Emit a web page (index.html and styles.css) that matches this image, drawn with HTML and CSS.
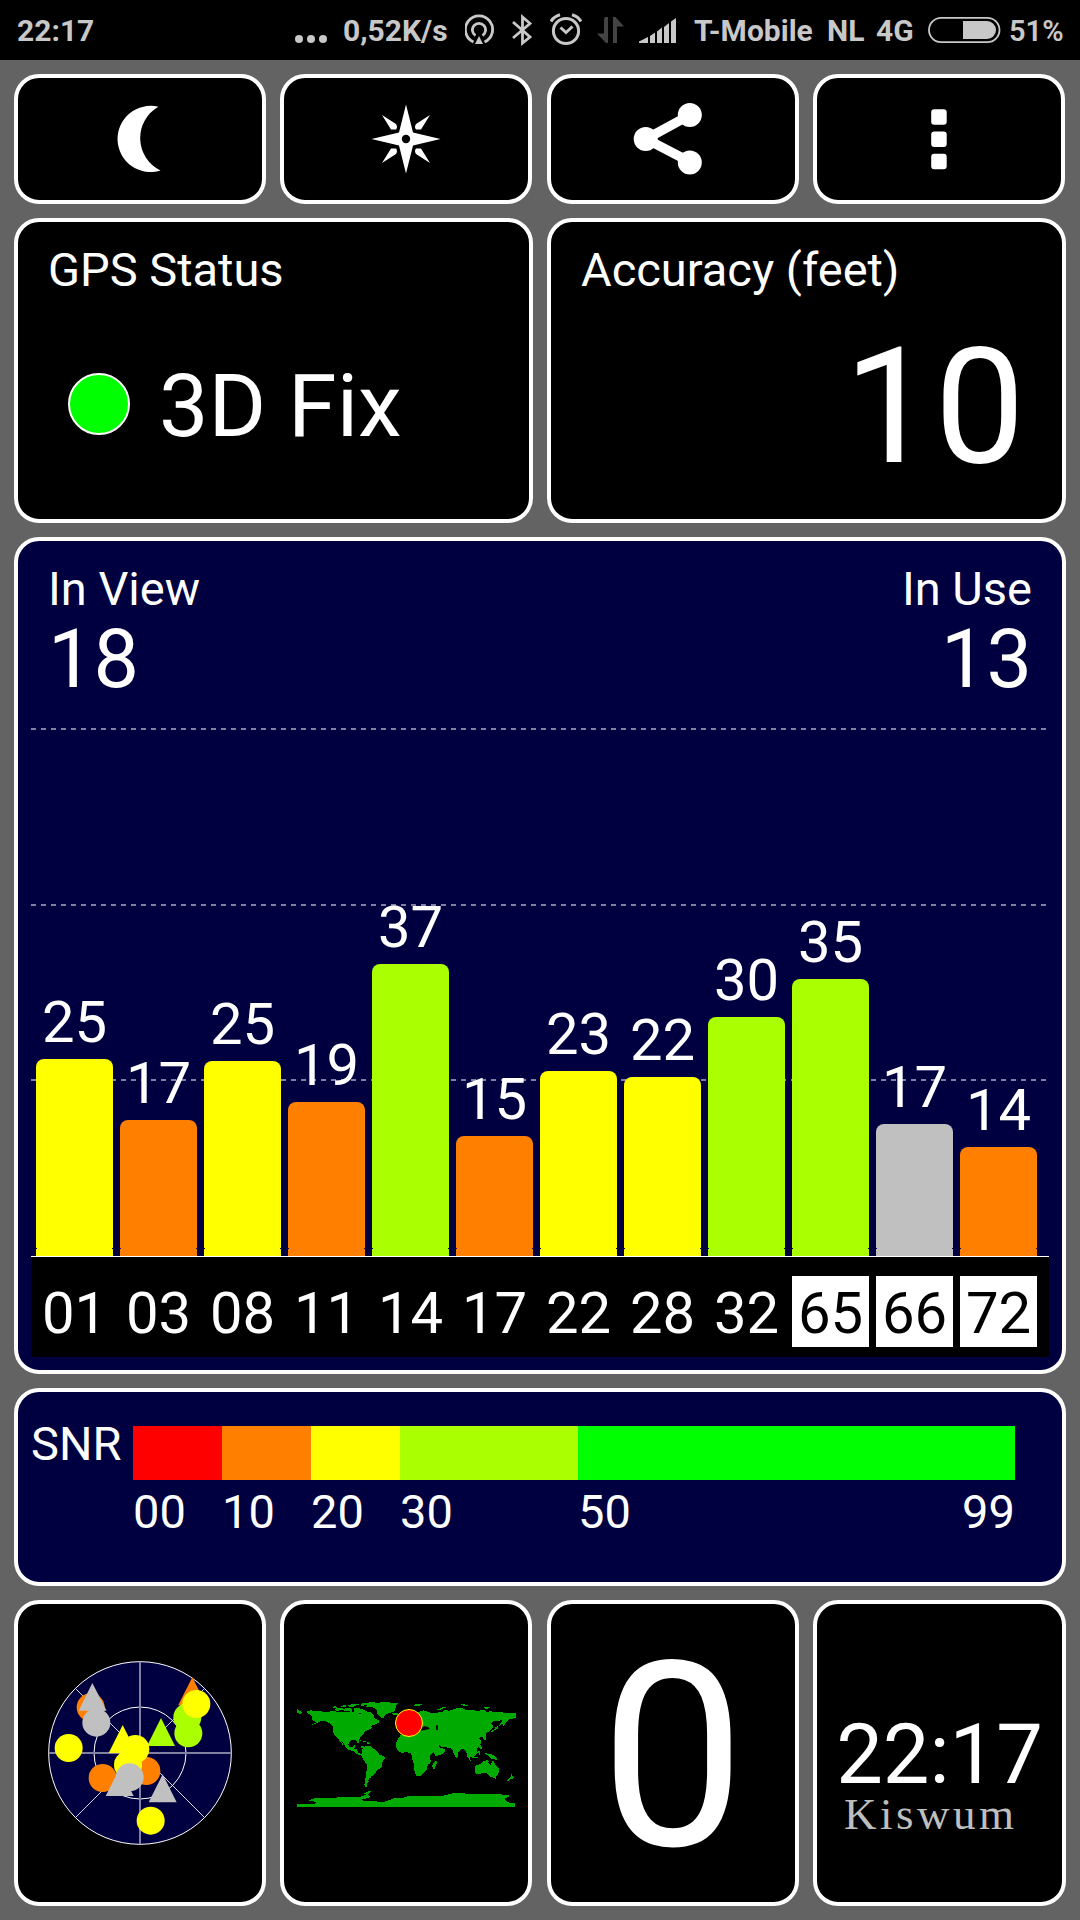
FILE: index.html
```html
<!DOCTYPE html>
<html lang="en">
<head>
    <meta charset="UTF-8">
    <meta name="viewport" content="width=device-width, initial-scale=1.0">
    <title>GPS Test</title>
    <link rel="stylesheet" href="styles.css">
</head>
<body>

<div class="statusbar">
    <span>22:17</span>
    <svg width="34" height="60" viewBox="0 0 34 60" fill="currentColor"><circle cx="4" cy="39" r="4"/><circle cx="16" cy="39" r="4"/><circle cx="28" cy="39" r="4"/></svg>
    <span>0,52K/s</span>
    <!-- hotspot -->
    <svg width="30" height="60" viewBox="0 0 30 60">
        <path d="M8.5 42A13.6 13.6 0 1 1 19.5 42M10.5 35.5A6.6 6.6 0 1 1 17.5 35.5" fill="none" stroke="currentColor" stroke-width="2.8"/>
        <path d="M14 36l4 8h-8z" fill="currentColor"/>
    </svg>
    <!-- bluetooth -->
    <svg width="22" height="60" viewBox="0 0 22 60"><path d="M1 22L18 37l-7.5 6V17L18 23.500L1 38" fill="none" stroke="currentColor" stroke-width="2.8"/></svg>
    <!-- alarm -->
    <svg width="34" height="60" viewBox="0 0 34 60" fill="none" stroke="currentColor" stroke-width="3">
        <circle cx="16" cy="31" r="12.600"/>
        <path d="M10.500 27.500l5.500 5 6.500-6M1 21.500C3 18 6 16 10 14.800M31 21.500C29 18 26 16 22 14.800"/>
    </svg>
    <svg class="dim" width="28" height="60" viewBox="0 0 28 60" fill="currentColor"><path d="M7 19q0-2 2-2h2v26H9L0 33.500h7zM16 17h2.500L27 26.500h-7V43h-4z"/></svg>
    <svg width="40" height="60" viewBox="0 0 40 60" fill="currentColor"><path d="M1 43v-1.500l9-4.500v6zM12 36l5-3.500V43h-5zM19 31.500l5-4V43h-5zM26 27l5-4v20h-5zM33 21.500l5-3.500v25h-5z"/></svg>
    <span>T-Mobile</span>
    <span>NL</span>
    <span>4G</span>
    <svg width="74" height="60" viewBox="0 0 74 60">
        <rect x="1" y="17.800" width="70.500" height="24.400" rx="12.200" fill="none" stroke="currentColor" stroke-width="1.800"/>
        <path d="M35 21h24a9 9 0 0 1 0 18H35z" fill="currentColor"/>
    </svg>
    <span class="percent">51%</span>
</div>

<div class="screen">
    <div class="row toolbar">
        <div class="card">
            <svg width="80" height="80" viewBox="0 0 80 80"><path d="M58.400 7.800A33 33.100 0 1 0 60.500 71.500A36 36 0 0 1 58.400 7.800z" fill="#fff"/></svg>
        </div>
        <div class="card">
            <svg width="80" height="80" viewBox="-40 -40 80 80" fill="#fff">
                <path d="M0-34.500L7-6.500 34.500 0 7 6.500 0 34.500-7 6.500-34.500 0-7-6.500z"/>
                <path d="M-24-24L-10-15Q-8-12-10-9.500L-15-9.500zM24-24L10-15Q8-12 10-9.500L15-9.500zM-24 24L-10 15Q-8 12-10 9.500L-15 9.500zM24 24L10 15Q8 12 10 9.500L15 9.500z"/>
                <circle r="4.200" fill="#000"/>
            </svg>
        </div>
        <div class="card">
            <svg width="80" height="80" viewBox="0 0 80 80" fill="#fff">
                <path d="M56.800 16.200L13 40l43.800 22.800" fill="none" stroke="#fff" stroke-width="9.500"/>
                <circle cx="12.700" cy="40" r="12"/><circle cx="56.800" cy="16" r="12"/><circle cx="56.800" cy="63.500" r="12"/>
            </svg>
        </div>
        <div class="card">
            <svg width="80" height="80" viewBox="0 0 80 80" fill="#fff"><rect x="32.200" y="10.200" width="15.500" height="15.500" rx="3"/><rect x="32.200" y="32.500" width="15.500" height="15.500" rx="3"/><rect x="32.200" y="54.800" width="15.500" height="15.500" rx="3"/></svg>
        </div>
    </div>

    <div class="row two">
        <div class="card info">
            <div class="label">GPS Status</div>
            <div class="fix"><span class="led"></span>3D Fix</div>
        </div>
        <div class="card info">
            <div class="label">Accuracy (feet)</div>
            <div class="accuracy">10</div>
        </div>
    </div>

    <div class="card signals">
        <div class="counts">
            <div>
                <div class="label">In View</div>
                <div class="count">18</div>
            </div>
            <div class="right">
                <div class="label">In Use</div>
                <div class="count">13</div>
            </div>
        </div>
        <div class="plot">
            <div class="grid"><i></i><i></i><i></i></div>
            <div class="sat"><b>25</b><div class="bar yellow" style="height:197px"></div></div>
            <div class="sat"><b>17</b><div class="bar orange" style="height:136px"></div></div>
            <div class="sat"><b>25</b><div class="bar yellow" style="height:195px"></div></div>
            <div class="sat"><b>19</b><div class="bar orange" style="height:154px"></div></div>
            <div class="sat"><b>37</b><div class="bar lime" style="height:292px"></div></div>
            <div class="sat"><b>15</b><div class="bar orange" style="height:120px"></div></div>
            <div class="sat"><b>23</b><div class="bar yellow" style="height:185px"></div></div>
            <div class="sat"><b>22</b><div class="bar yellow" style="height:179px"></div></div>
            <div class="sat"><b>30</b><div class="bar lime" style="height:239px"></div></div>
            <div class="sat"><b>35</b><div class="bar lime" style="height:277px"></div></div>
            <div class="sat"><b>17</b><div class="bar gray" style="height:132px"></div></div>
            <div class="sat"><b>14</b><div class="bar orange" style="height:109px"></div></div>
        </div>
        <div class="ids">
            <span>01</span><span>03</span><span>08</span><span>11</span><span>14</span><span>17</span>
            <span>22</span><span>28</span><span>32</span><span class="glonass">65</span><span class="glonass">66</span><span class="glonass">72</span>
        </div>
    </div>

    <div class="card snr">
        <div class="snr-label">SNR</div>
        <div>
            <div class="scale"><div class="red"></div><div class="orange"></div><div class="yellow"></div><div class="lime"></div><div class="green"></div></div>
            <div class="scale ticks"><span>00</span><span>10</span><span>20</span><span>30</span><span>50</span><span>99</span></div>
        </div>
    </div>

    <div class="row tiles">
        <div class="card">
            <!-- sky view -->
            <svg class="sky" width="220" height="220" viewBox="0 0 660 660">
                <circle cx="330" cy="339" r="274" fill="#000040" stroke="#fff" stroke-width="3"/>
                <circle cx="330" cy="339" r="138" fill="none" stroke="#fff" stroke-width="3"/>
                <path d="M137 146l386 386M523 146L137 532" stroke="#fff" stroke-width="2.500"/>
                <path d="M330 65v548M56 339h548" stroke="#8080a0" stroke-width="6"/>
                <g fill="#ff8000"><circle cx="182" cy="202" r="42"/><circle cx="218" cy="414" r="42"/><circle cx="349" cy="393" r="42"/><path d="M487 112l42 83h-84z"/></g>
                <g fill="#aaff00"><circle cx="472" cy="232" r="42"/><circle cx="475" cy="280" r="42"/><path d="M393 234l42 84h-84z"/></g>
                <g fill="#ff0"><circle cx="499" cy="192" r="42"/><circle cx="116" cy="324" r="42"/><circle cx="316" cy="327" r="42"/><circle cx="294" cy="375" r="42"/><circle cx="362" cy="542" r="42"/><path d="M278 255l42 84h-84z"/></g>
                <g fill="#c0c0c0"><circle cx="199" cy="248" r="42"/><circle cx="299" cy="412" r="42"/><path d="M187 129l43 83h-84zM269 385l42 83h-84zM398 403l42 84h-84z"/></g>
            </svg>
        </div>
        <div class="card">
            <!-- world map -->
            <svg class="map" width="245" height="150" viewBox="0 0 735 450">
                <g fill="#00aa00" shape-rendering="crispEdges">
                    <!-- North and Central America -->
                    <path d="M78 95l15-4 24 3 30 2 6-4 30 5 22 0 8-4 12 5 8-10 7 6-2 8 10 1 8-8 12 0 12 8 4 12 12 6 1 6-13 8-10 2-3 5 9 1-15 6-11 6-6 10-8 8-4 8 1 10-5-3-3-7-12-1-9 5-3 8 4 9 9-2 4-4 5 1-4 9 9 2 1 10 9 4 0 3-10-2-10-8-12-4-13-7-2-8-9-11-6-8 8 14 1 5-8-10-7-12-10-7-4-10 0-14-5-9-10-6-12-5-11 0-9 6-18 6 14-9-10-5-5-7 4-4z"/>
                    <path d="M51 87l12 8 6 4-6 2-12-1z"/>
                    <!-- Arctic islands and Greenland -->
                    <path d="M165 86l17-3 9 4 10-3 14 2 0 6-11 1-16-2-20 1zM153 85l13-7 7 3-8 4zM181 78l16-3 5 4-16 3zM205 75l18-4 20 0-13 5-10 5-14-1zM223 85l16 0 20 8 10 8 4 8-3 3 7 10 4 9-5 3-9-11-8-2-7-8-1-8-12-7-17-1z"/>
                    <path d="M247 70l25-3 22 1 20-2 17 1-3 3 20-1 7 2-8 4 1 7-4 5 2 6-12 4-12 4-9 8-3 6-8-2-6-7-5-7-1-8-8-8-7-2-18 0 5-5-20 1z"/>
                    <path d="M335 99l8-1 9 0 4 3-4 3-9 2-6-3zM253 182l5 7-2-7zM237 181l14 1 10 5-12-2zM260 187l11 1-4 5-8-3z"/>
                    <!-- South America -->
                    <path d="M238 202l10-5 3 3 10-1 10 0 9 7 7 4 6 6 5 8 14 5 3 5-8 12-1 11-5 9-8 3-7 10-5 7-8 3-1 5-6 2-1 6 1 4-6 4 1 9 4 4-8-2-4-7 2-13 3-12 1-12 3-16-1-9-6-5-5-9-5-8-2-6 4-5-1-7 3-9z"/>
                    <!-- Africa -->
                    <path d="M361 166l20-3 12 1 5 6 12 2 8-3 14 3 7 3 3 8 8 14 4 5 12-2 5 3-8 11-11 11-3 7 3 9-1 9-8 5-2 7-1 7-7 8-7 7-8 5-9 0-3-10-5-13 1-11-3-11-4-10 0-9-4-7-16-1-7 1-9-1-6-7-5-7 1-15 5-10z"/>
                    <path d="M468 242l3 5-4 11-3 8-6 0-1-9 4-9z"/>
                    <!-- Europe and Asia -->
                    <path d="M387 137l16-4 5-8 1-12-3-9 9-8 14-5 12 4 10 3 12 2 12-3 10-2 0 7 4-9 12-4 4 5 14-6 17-5 12 1 9 7 24-2 6 4 25-3 6 6 14-2 16 3 15-1 15 4 31-1 0 14-18 4-10 6-5 8-5 8-4-9 3-8 1-7-12 7-18 1-8 9 6 5-2 8-8 9-9 4-3 8 3 8-4 7-5-1-2-7-7-3-5 6 4 4 3 6-3 8-7 10-10 4-7 2 4 8 3 8-6 7-8-6-1 9 5 8-4-3-9-12-1-10-3-9-6-5-8 2-9 11-1 11-4 5-8-14-5-13-8-3-11-2-12-1-3-4-6-2 5 9 11 2 4 6-7 9-16 6-6 1-6-10-7-11-4-7 1-6-19-2-10-3-4 4-4-7-10-8-9-3-3 5-8 5-6 0-2-7 7-3z"/>
                    <path d="M404 73l10-2 13 1-2 3-10 4-13-2zM467 91l15-7 14-4 5 1-12 5-11 5zM543 73l12 0 13 6-17 0zM610 83l16-3 5 3-13 4zM668 109l4 8-4 13-10 8 2-6 7-8zM654 138l0 8-8 4-11 6-1-3 9-4 3-7zM598 187l5 10 4 11-5 1-7-9zM548 199l13 10 11 12-3 5-12-12-8-10zM573 218l8-11 9-1 3 11-7 9-11-1zM595 212l8 0-5 7 5 8-7-3zM570 229l12 1 14 3-8 1-18-3zM612 218l15 4 15 3 5 7 7 9-12-3-8-2-13-11zM526 202l3 6-3 3-3-6z"/>
                    <!-- Australia and New Zealand -->
                    <path d="M587 257l13-4 7-7 11-5 9 1-2 7 7 5 4-8 3-7 3 8 5 9 9 9 1 11-4 10-9 7-11-1-8-7-7-6-12 0-9 3-9 1-2-6 0-10-3-6zM642 291l7 1-3 6zM694 281l4 8 4 1-4 7-4 1 0-8zM691 292l4 3-8 8-5-1z"/>
                    <!-- Antarctica -->
                    <path d="M51 372H103L109 366 96 363 85 361 108 353 160 353 240 350 250 347 258 343 252 340 262 335 272 332 272 336 264 344 270 349 266 354 240 360 260 363 284 363 306 367 328 360 343 354 370 353 390 347 440 349 485 348 510 342 525 338 575 342 630 341 660 343 685 345 687 350 676 354 677 363 690 369H705V382H51z"/>
                </g>
                <path d="M420 145l13-6 12 2 4 6-14 3-12 2zM468 137l5-3 1 17-6-2z" fill="#000"/>
                <circle cx="387" cy="129" r="40.500" fill="#f00" stroke="#ff0" stroke-width="3"/>
            </svg>
        </div>
        <div class="card speed">0</div>
        <div class="card clock">
            <div class="time">22:17</div>
            <div class="place">Kiswum</div>
        </div>
    </div>
</div>

</body>
</html>
```
FILE: styles.css
```css
* {
    box-sizing: border-box;
}

body {
    margin: 0;
    width: 1080px;
    height: 1920px;
    overflow: hidden;
    background-color: #636363;
    color: #fff;
    font-family: Roboto, "Liberation Sans", sans-serif;
}

svg {
    display: block;
    flex: none;
}

/* status bar */
.statusbar {
    display: grid;
    grid-template-columns: 278px 48px 122px 47px 38px 47px 41px 56px 133px 49px 52px 81px 60px;
    height: 60px;
    padding-left: 17px;
    background-color: #000;
    color: #c8c8c8;
    font-size: 30px;
    font-weight: 700;
    line-height: 62px;
    white-space: nowrap;
}

.percent {
    font-size: 29px;
    font-weight: 600;
}

.dim {
    color: #444;
}

/* cards */
.screen {
    display: flex;
    flex-direction: column;
    gap: 14px;
    padding: 14px;
}

.row {
    display: grid;
    grid-template-rows: 100%;
    column-gap: 14px;
}

.two {
    grid-template-columns: 519px 519px;
    height: 305px;
}

.card {
    border: 4px solid #fff;
    border-radius: 25px;
    background-color: #000;
}

.toolbar {
    grid-template-columns: 252px 252px 252px 252px;
    justify-content: space-between;
    width: 1051px;
    height: 130px;
}

.toolbar .card {
    display: flex;
    align-items: center;
    justify-content: center;
}

.label {
    font-size: 47px;
    line-height: 58px;
}

/* fix status and accuracy */
.info {
    padding: 19px 37px 0 30px;
}

.fix {
    display: flex;
    align-items: center;
    margin-top: 57px;
    padding-left: 20px;
    font-size: 88px;
    line-height: 100px;
}

.led {
    width: 62px;
    height: 62px;
    margin: -4px 29px 0 0;
    border: 2px solid #fff;
    border-radius: 50%;
    background-color: #0f0;
}

.accuracy {
    margin-top: 28px;
    font-size: 161px;
    line-height: 160px;
    text-align: right;
}

/* signal chart */
.signals {
    width: 1052px;
    height: 837px;
    padding: 19px 13px 0;
    background-color: #000040;
}

.counts {
    display: flex;
    justify-content: space-between;
    padding: 0 17px;
}

.count {
    font-size: 81px;
    line-height: 84px;
}

.right {
    text-align: right;
}

.plot {
    position: relative;
    display: flex;
    align-items: flex-end;
    gap: 7px;
    height: 529px;
    margin-top: 26px;
    padding-left: 5px;
    border-bottom: 1px solid #fff;
}

.grid {
    position: absolute;
    inset: 0 0 1px;
}

.grid i {
    display: block;
    height: 2px;
    margin-bottom: 174px;
    background: repeating-linear-gradient(to right, #8080a0 0 5px, transparent 5px 10px);
}

.grid i:nth-child(2) {
    margin-bottom: 173px;
}

.sat {
    position: relative;
    width: 77px;
    text-align: center;
}

.sat b {
    display: block;
    font-size: 58px;
    font-weight: 400;
    line-height: 73px;
}

.bar {
    position: relative;
    border-radius: 8px 8px 0 0;
}

/* small notch above the base line */
.bar::after {
    content: "";
    position: absolute;
    inset: auto 0 7px;
    height: 1px;
    border: solid #000040;
    border-width: 0 1px;
}

.ids {
    display: flex;
    gap: 7px;
    height: 100px;
    padding: 19px 5px 0;
    background-color: #000;
    font-size: 58px;
    line-height: 74px;
    text-align: center;
}

.ids span {
    width: 77px;
    height: 71px;
}

.ids .glonass {
    background-color: #fff;
    color: #000;
}

.red { background-color: #f00; }
.orange { background-color: #ff8000; }
.yellow { background-color: #ff0; }
.lime { background-color: #aaff00; }
.green { background-color: #0f0; }
.gray { background-color: #c0c0c0; }

/* SNR legend */
.snr {
    display: flex;
    width: 1052px;
    height: 198px;
    padding: 34px 0 0 12px;
    background-color: #000040;
    font-size: 47px;
    line-height: 55px;
}

.snr-label {
    width: 103px;
    margin-top: -10px;
    padding-left: 1px;
}

.scale {
    display: grid;
    grid-template-columns: 89px 89px 89px 178px 437px;
    height: 54px;
}

.ticks {
    grid-template-columns: 89px 89px 89px 178px 384px 53px;
    margin-top: 4px;
}

/* bottom tiles */
.tiles {
    grid-template-columns: 252px 252px 252px 253px;
    justify-content: space-between;
    width: 1052px;
    height: 306px;
}

.sky {
    margin: 36px 0 0 12px;
}

.map {
    margin: 76px 0 0 -4px;
}

.speed {
    font-size: 258px;
    line-height: 306px;
    text-align: center;
}

.clock {
    padding-top: 111px;
}

.time {
    font-size: 83px;
    line-height: 80px;
    text-align: center;
}

.place {
    margin-top: -3px;
    padding-left: 27px;
    color: #bebebe;
    font-family: "Liberation Serif", serif;
    font-size: 45px;
    letter-spacing: 3.5px;
    line-height: 45px;
}
```
